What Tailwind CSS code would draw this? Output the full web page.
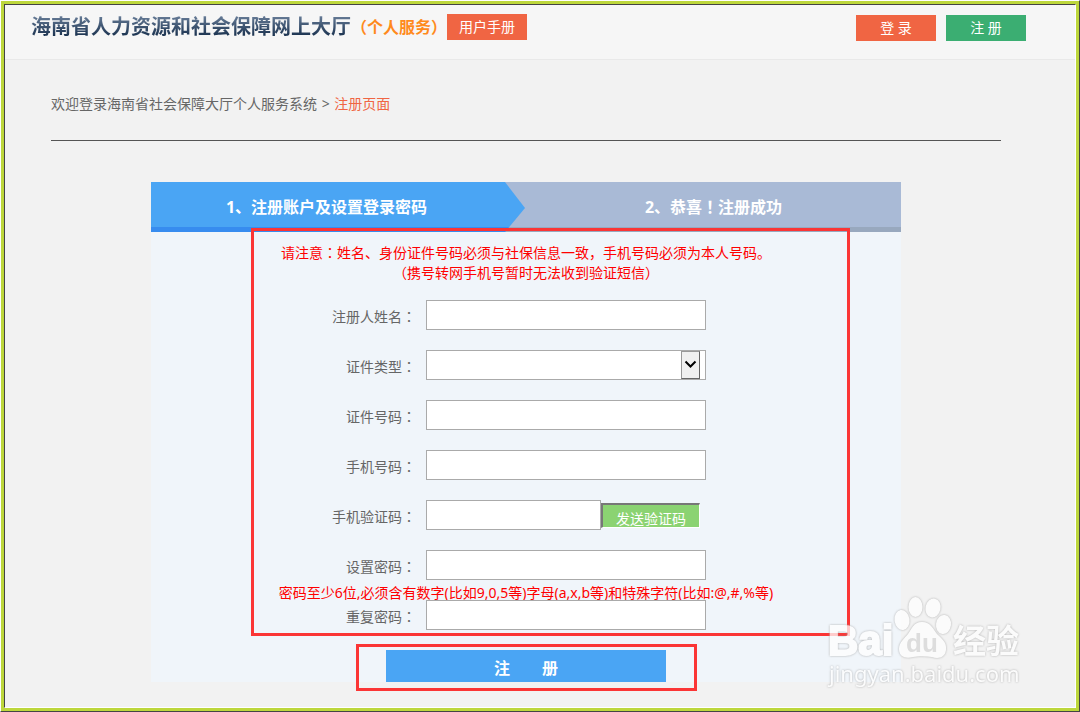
<!DOCTYPE html>
<html lang="zh-CN">
<head>
<meta charset="utf-8">
<meta name="viewport" content="width=device-width, initial-scale=1">
<title>海南省人力资源和社会保障网上大厅</title>
<script src="https://cdn.jsdelivr.net/npm/@tailwindcss/browser@4"></script>
</head>
<body class="font-['Noto_Sans','Noto_Sans_CJK_SC',sans-serif] text-sm text-[#666]">
<div class="min-h-screen flex border border-t-white border-l-white border-r-[#444] border-b-[#444]">
<div class="flex-1 flex border-3 border-[#bdd73c]">
<div class="relative flex-1 min-w-0 bg-[#f2f2f2] border border-t-[#444] border-l-[#444] border-r-white border-b-white">

  <header class="h-[55px] flex items-start bg-[#f6f6f6] border-b border-[#e9e9e9] pl-[26px] pr-[49px]">
    <h1 class="flex items-center pt-1 font-bold whitespace-nowrap">
      <span class="text-xl leading-9 bg-linear-to-b from-[#667b96] from-20% to-[#1b3350] to-75% bg-clip-text text-transparent">海南省人力资源和社会保障网上大厅</span>
      <span class="text-base leading-9 text-[#ff8a1c]">（个人服务）</span>
    </h1>
    <a href="#" class="mt-[9px] w-20 h-[26px] leading-[26px] text-center bg-[#f06543] text-white">用户手册</a>
    <nav class="ml-auto mt-[10px] flex gap-[10px] text-white text-center leading-[26px]">
      <a href="#" class="w-20 h-[26px] bg-[#f06543]">登 录</a>
      <a href="#" class="w-20 h-[26px] bg-[#3bae72]">注 册</a>
    </nav>
  </header>

  <main class="pl-[46px] pr-[74px] pb-6">
    <p class="pt-8 pb-6 leading-6 border-b border-[#555]">欢迎登录海南省社会保障大厅个人服务系统 <span class="px-px">&gt;</span> <a href="#" class="text-[#f06543]">注册页面</a></p>

    <form class="relative mt-[41px] mx-auto max-w-[750px] bg-[#f0f5fa]">
      <ol class="flex h-[50px] bg-[#a9bad6] border-b-5 border-[#98a8be] text-base font-bold text-white text-center leading-[50px]">
        <li class="relative w-1/2 pr-6">
          <svg class="absolute left-0 top-0 w-full h-[50px]" viewBox="0 0 375 50" preserveAspectRatio="none" aria-hidden="true">
            <path d="M0 0H354L374 26L354 50H0Z" fill="#4aa5f4"/>
            <path d="M0 45H358L354 50H0Z" fill="#378cef"/>
          </svg>
          <span class="relative">1、注册账户及设置登录密码</span>
        </li>
        <li class="w-1/2">2、恭喜<span lang="ja" class="leading-none font-['Noto_Sans_CJK_JP']">！</span>注册成功</li>
      </ol>

      <p class="pt-[11px] mb-[17px] text-center leading-5 text-[#f00]">请注意<span lang="ja" class="leading-none font-['Noto_Sans_CJK_JP']">：</span>姓名、身份证件号码必须与社保信息一致，手机号码必须为本人号码。<br>（携号转网手机号暂时无法收到验证短信）</p>

      <div class="flex mb-5">
        <label for="name" class="w-[275px] pr-[10px] pt-1 text-right leading-[26px]">注册人姓名<span lang="ja" class="leading-none font-['Noto_Sans_CJK_JP']">：</span></label>
        <input id="name" type="text" class="w-[280px] h-[30px] px-2 bg-white border border-[#aaa]">
      </div>
      <div class="flex mb-5">
        <label for="idtype" class="w-[275px] pr-[10px] pt-1 text-right leading-[26px]">证件类型<span lang="ja" class="leading-none font-['Noto_Sans_CJK_JP']">：</span></label>
        <div class="relative h-[30px]">
          <select id="idtype" class="block appearance-none w-[280px] h-[30px] px-2 bg-white border border-[#aaa]"><option></option></select>
          <span class="absolute right-[6px] top-px w-[19px] h-7 flex items-center justify-center bg-[#f0f0f0] border border-[#999] border-r-[#666] border-b-[#666] pointer-events-none">
            <svg width="13" height="10" viewBox="0 0 13 10" fill="none" stroke="#000" stroke-width="2" aria-hidden="true"><path d="M1.5 1.5L6.5 6.5L11.5 1.5"/></svg>
          </span>
        </div>
      </div>
      <div class="flex mb-5">
        <label for="idno" class="w-[275px] pr-[10px] pt-1 text-right leading-[26px]">证件号码<span lang="ja" class="leading-none font-['Noto_Sans_CJK_JP']">：</span></label>
        <input id="idno" type="text" class="w-[280px] h-[30px] px-2 bg-white border border-[#aaa]">
      </div>
      <div class="flex mb-5">
        <label for="phone" class="w-[275px] pr-[10px] pt-1 text-right leading-[26px]">手机号码<span lang="ja" class="leading-none font-['Noto_Sans_CJK_JP']">：</span></label>
        <input id="phone" type="tel" class="w-[280px] h-[30px] px-2 bg-white border border-[#aaa]">
      </div>
      <div class="flex mb-5">
        <label for="code" class="w-[275px] pr-[10px] pt-1 text-right leading-[26px]">手机验证码<span lang="ja" class="leading-none font-['Noto_Sans_CJK_JP']">：</span></label>
        <input id="code" type="text" class="w-[175px] h-[30px] px-2 bg-white border border-[#aaa]">
        <button type="button" class="mt-[3px] w-[99px] h-[25px] pt-1 leading-5 text-white bg-[#8bd372] border-t-2 border-l-2 border-r border-b border-t-[#777] border-l-[#777] border-r-white border-b-white">发送验证码</button>
      </div>
      <div class="flex">
        <label for="pwd" class="w-[275px] pr-[10px] pt-1 text-right leading-[26px]">设置密码<span lang="ja" class="leading-none font-['Noto_Sans_CJK_JP']">：</span></label>
        <input id="pwd" type="password" class="w-[280px] h-[30px] px-2 bg-white border border-[#aaa]">
      </div>
      <p class="h-5 leading-[26px] text-center text-[#f00]">密码至少6位,必须含有数字(比如9,0,5等)字母(a,x,b等)和特殊字符(比如:@,#,%等)</p>
      <div class="flex mb-5">
        <label for="pwd2" class="w-[275px] pr-[10px] pt-1 text-right leading-[26px]">重复密码<span lang="ja" class="leading-none font-['Noto_Sans_CJK_JP']">：</span></label>
        <input id="pwd2" type="password" class="w-[280px] h-[30px] px-2 bg-white border border-[#aaa]">
      </div>
      <button type="submit" class="block mx-auto w-[280px] h-8 pt-1 leading-7 text-base font-bold text-white bg-[#4aa5f4]">注　　册</button>

      <!-- highlight frames over the form -->
      <div class="absolute left-[100px] top-[46px] w-[599px] h-[408px] border-3 border-[#fb3535] pointer-events-none"></div>
      <div class="absolute left-[205px] top-[462px] w-[341px] h-[47px] border-3 border-[#fb3535] pointer-events-none"></div>
    </form>
  </main>

  <!-- watermark -->
  <svg class="absolute right-[49px] bottom-[15px] pointer-events-none opacity-75 drop-shadow-[0_0_1px_#999]" width="204" height="100" viewBox="0 0 204 100" role="img" aria-label="Baidu 经验">
    <g fill="#fff">
      <text x="6" y="63" font-family="Liberation Sans, sans-serif" font-weight="700" font-size="42" stroke="#fff" stroke-width="2">Bai</text>
      <ellipse cx="80" cy="28" rx="7.5" ry="10" transform="rotate(-8 80 28)"/>
      <ellipse cx="93.5" cy="15" rx="7" ry="10"/>
      <ellipse cx="111" cy="16" rx="7.5" ry="9.5" transform="rotate(12 111 16)"/>
      <ellipse cx="121.5" cy="32.5" rx="7.5" ry="9.5" transform="rotate(8 121.5 32.5)"/>
      <path d="M100 30C109 30 111 37 115 42C120 47 125 50 124 58C123 66 116 67 110 65C104 64 96 64 91 65C84 67 77 65 77 57C77 50 83 46 86 42C90 37 91 30 100 30Z"/>
      <text x="131" y="61" font-family="Noto Sans CJK SC, sans-serif" font-weight="700" font-size="33">经验</text>
      <text x="7" y="90" font-family="Noto Sans, sans-serif" font-size="22">jingyan.baidu.com</text>
    </g>
    <text x="84" y="60" font-family="Liberation Sans, sans-serif" font-weight="700" font-size="26" fill="#d6d6d6">du</text>
  </svg>
</div>
</div>
</div>
</body>
</html>
